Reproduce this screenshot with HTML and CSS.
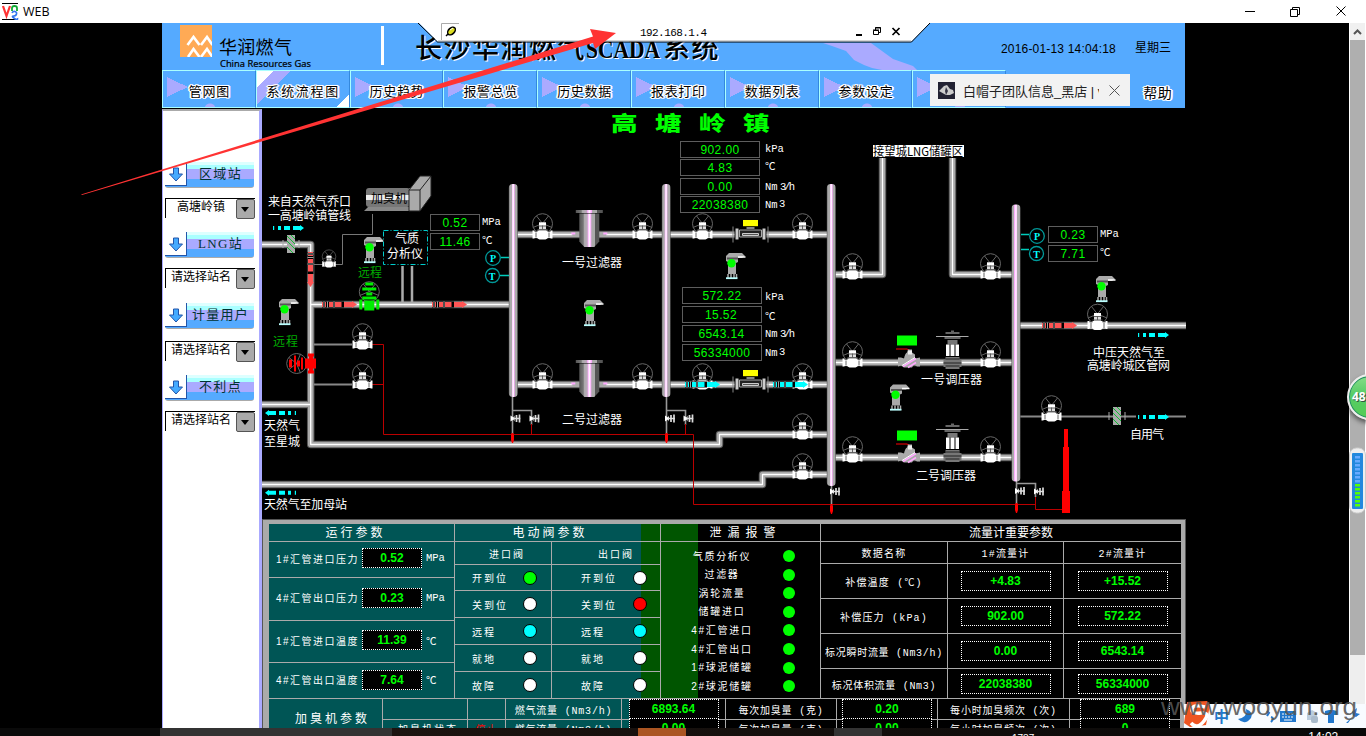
FILE: index.html
```html
<!DOCTYPE html>
<html lang="zh-CN">
<head>
<meta charset="utf-8">
<title>WEB</title>
<link rel="stylesheet" href="styles.css">
</head>
<body>
<header class="titlebar">
  <svg class="vnc" width="17" height="17" viewBox="0 0 17 17"><path d="M0 .5H16M0 16.5H16" stroke="#000"/><path d="M1 3l3.500 10L8 3" fill="none" stroke="#f33" stroke-width="2.200"/><path d="M10 8V5q0-2 2.500-2T15 5v3" fill="none" stroke="#1a3" stroke-width="1.800"/><path d="M10 10q1-2 3-1.500t1.500 2.500-3 2 1 2.500 3-.5" fill="none" stroke="#37e" stroke-width="1.600"/></svg>
  <span class="titletext">WEB</span>
  <svg class="winctl" width="110" height="20" viewBox="1245 1 110 20" fill="none" stroke="#000"><path d="M1245 10.500h10M1290.500 8.500h7v7h-7zM1292.500 8.500v-2h7v7h-2M1336.500 5.500l9 9M1345.500 5.500l-9 9"/></svg>
</header>

<div class="desk">
  <div class="app">
    <div class="banner">
      <svg class="logo" width="32" height="32" viewBox="0 0 32 32"><rect width="32" height="32" fill="#fa5"/><path d="M7.500 20l6-8 6 8M21 20l6-8 5.500 8M8 32l5.500-8 6 8M21 32l6-8 5.500 8" fill="none" stroke="#fff" stroke-width="2.600"/></svg>
      <div class="brand"><b>华润燃气</b><i>China Resources Gas</i></div>
      <div class="divider"></div>
      <h1>长沙华润燃气<span>SCADA</span>系统</h1>
      <svg class="swoosh" width="130" height="47" viewBox="0 0 130 47"><path d="M10 20h54l22 16 20 7 4 4H75l-10-2-8-3-10-5-8-9-14-5-9-3z" fill="#aaf"/></svg>
      <span class="clock">2016-01-13 14:04:18</span><span class="week">星期三</span>
    </div>
    <nav class="tabs">
      <a><span>管网图</span></a><a class="on"><span>系统流程图</span></a><a><span>历史趋势</span></a><a><span>报警总览</span></a><a><span>历史数据</span></a><a><span>报表打印</span></a><a><span>数据列表</span></a><a><span>参数设定</span></a><a></a>
      <span class="help">帮助</span>
    </nav>
    <div class="work">
      <aside class="side">
        <div class="sbtn"><svg width="21" height="21" viewBox="0 0 21 21"><path d="M8.500 4h5v6h4L11 17l-6.500-7h4z" fill="#4af" stroke="#25a"/></svg><span>区域站</span></div>
        <div class="sel"><span class="mid">高塘岭镇</span><i></i></div>
        <div class="sbtn"><svg width="21" height="21" viewBox="0 0 21 21"><path d="M8.500 4h5v6h4L11 17l-6.500-7h4z" fill="#4af" stroke="#25a"/></svg><span>LNG站</span></div>
        <div class="sel"><span>请选择站名</span><i></i></div>
        <div class="sbtn low"><svg width="21" height="21" viewBox="0 0 21 21"><path d="M8.500 4h5v6h4L11 17l-6.500-7h4z" fill="#4af" stroke="#25a"/></svg><span>计量用户</span></div>
        <div class="sel"><span>请选择站名</span><i></i></div>
        <div class="sbtn"><svg width="21" height="21" viewBox="0 0 21 21"><path d="M8.500 4h5v6h4L11 17l-6.500-7h4z" fill="#4af" stroke="#25a"/></svg><span>不利点</span></div>
        <div class="sel"><span>请选择站名</span><i></i></div>
      </aside>
      <main class="main">
<svg class="flow" width="924" height="410" viewBox="262 109 924 410">
<defs>
  <g id="pipes"><path d="M262 244.500H310.700V444.500H719.500V434.500H828"/><path d="M311 304.500H510"/><path d="M262 404.500H311"/><path d="M262 484.500H762.500V474.500H828"/><path d="M515 234.500H828M515 384.500H828"/><path d="M833 274.500H882.500V158M952.500 158V274.500H1013M833 362.500H1013M833 457.500H1013M1018 325.500H1186"/></g>
  <linearGradient id="tube"><stop offset="0" stop-color="#555"/><stop offset=".12" stop-color="#aaa"/><stop offset=".3" stop-color="#aaa"/><stop offset=".33" stop-color="#faf"/><stop offset=".5" stop-color="#fff"/><stop offset=".62" stop-color="#faf"/><stop offset=".66" stop-color="#aaa"/><stop offset=".88" stop-color="#aaa"/><stop offset="1" stop-color="#555"/></linearGradient>
  <g id="wheel" fill="none" stroke="#666"><circle cy="-10.800" r="10"/><path d="M0-11L-6-18.500M0-11L6-18.500M0-11L-9.500-7M0-11L9.500-7"/></g>
  <g id="valve"><use href="#wheel"/><path d="M-3.500-12h7v8h-7z" fill="#ddd"/><path d="M-3.500-12h7v3h-7zM-5-4H5V4l-2 1H-3l-2-1zM-10-4h2v8h-2zM8-4h2v8H8zM-8-2.500h3v6h-3zM5-2.500h3v6H5z" fill="#fff"/><path d="M-4-8.500H4M-5-5H5M0-9V-5M-6.500-2V3M6.500-2V3" stroke="#555" stroke-width=".9"/></g>
  <g id="cam"><path d="M0 3L3 0H16L19 3 16 5H12V9L10 10V21H2V9L0 8z" fill="#aaa"/><path d="M1 5.500h11" stroke="#555" stroke-width="2"/><path d="M12 4h7.500" stroke="#fff" stroke-width="1.500"/><path d="M2 21v4M5 21v4M8 21v4M10.500 21v4" stroke="#aaa" stroke-width="1.500"/><path d="M0 25.200h11.500" stroke="#bff" stroke-width="1.800"/><circle cx="5.500" cy="10.200" r="4.200" fill="#0f0"/></g>
  <linearGradient id="vesselFill"><stop offset="0" stop-color="#555"/><stop offset=".2" stop-color="#777"/><stop offset=".25" stop-color="#aaa"/><stop offset=".4" stop-color="#bab"/><stop offset=".44" stop-color="#faf"/><stop offset=".5" stop-color="#fff"/><stop offset=".58" stop-color="#faf"/><stop offset=".62" stop-color="#aaa"/><stop offset=".78" stop-color="#aaa"/><stop offset=".8" stop-color="#555"/><stop offset="1" stop-color="#555"/></linearGradient>
  <g id="vessel"><path d="M-17-2.500h34v4h-34z" fill="#aaa"/><path d="M-10-21H10V7L5 12.500H-5L-10 7z" fill="url(#vesselFill)"/><path d="M-13.500-24.500h27v3h-27z" fill="url(#vesselFill)"/><path d="M-18-1h4M14-1h4" stroke="#faf" stroke-width="2"/></g>
  <g id="meter"><path d="M-16-5h32V5h-32z" fill="#000"/><path d="M-17.500-8V8M17.500-8V8" stroke="#888"/><path d="M-15-6h3V5h-3zM12-6h3V5h-3z" fill="#ccc"/><path d="M-11-4.500h22v7h-22z" fill="#222" stroke="#aaa"/><path d="M-8 1v-2h16v2z" fill="#555" stroke="#ccc"/><path d="M-4-7.500h8v2h-8z" fill="#888"/><path d="M-7.500-14.500h15v6.200h-15z" fill="#ff0"/></g>
  <g id="reg"><path d="M-12-27h20v10h-20z" fill="#0f0"/><path d="M-13-13.500H-2L1-12" stroke="#f00" fill="none"/><path d="M-11-5H-8L-5-4Q-4-9-2-10L-1-13H3V-10L6-8V-4L11-5V4H8L5 2 3 5H-5L-8 3-11 4z" fill="#aaa"/><path d="M-1-12h4v4h-4" fill="#eee"/><path d="M-6 4L7-4M-1 5L7 0" stroke="#faf" stroke-width="1.600"/><path d="M-7 3L6-5" stroke="#fff"/></g>
  <g id="slam"><path d="M-16.500-26.500H16" stroke="#aaa"/><path d="M-1.500-32.500H1.500V-31H7V-29H-7V-31H-1.500zM-8-26H8V-24H-8z" fill="#666"/><path d="M-5-23H5V-18.500H-5zM-7-6H7V-3H9V4H7V6H-7V4H-9V-3H-7z" fill="#777"/><path d="M-6.500-18.500H-3V-7H-6.500zM-2-18.500H2V-7H-2zM3-18.500H6.500V-7H3z" fill="#fff"/><path d="M-9 0H9M-7-4H7M-7 3H7" stroke="#222"/></g>
  <g id="flowarrow"><path d="M0-2h1.200v4H0zM5-2H8v4H5zM11-2h6v4h-6zM20-2h7v-1l4 3-4 3V2h-7z"/></g>
  <g id="pipearrow"><path d="M0-3H22V3H0z" fill="#000"/><path d="M0-2.500H1V2.500H0zM3-2.500H4V2.500H3zM7-2.500h4v5H7zM13-2.500h6.500v5H13zM22-2.500h8v-1l5 3.500-5 3.500v-1h-8z"/><path d="M2-3V3M5.500-3V3M12-3V3" stroke="#ccc" stroke-width=".8"/></g>
  <g id="strain"><path d="M-8-4v8M8-4v8" stroke="#aaa"/><path d="M-4-9h8V9h-8z" fill="#aaa"/><path d="M-4-8L4 0M-4-3L4 5M-4 3L2 9M0-9L4-5" stroke="#1b3"/></g>
  <g id="bow"><path d="M-2-3L1-1 2-3V3L1 1-2 3z" fill="#fff"/><path d="M1 0H8M4-3.500v7M7-4v8" stroke="#ddd" stroke-width="1.700"/></g>
  <path id="drop" d="M-1-5H1V-3H1.500V2L.5 5H-.5L-1.500 2V-3H-1z" fill="#f00"/>
</defs>
<rect x="262" y="109" width="924" height="410" fill="#000"/>
<g fill="none" stroke-linejoin="round">
  <use href="#pipes" stroke="#555" stroke-width="7.500"/><use href="#pipes" stroke="#aaa" stroke-width="5.500"/><use href="#pipes" stroke="#fff" stroke-width="1.300"/>
</g>
<g fill="none" stroke="#777"><path d="M372.500 214V234.500H342.500V264.500H314"/><path d="M314 344.500H352M314 384.500H352M1020 416.500H1186" stroke-width="2" stroke="#888"/><path d="M402.500 266V303M412 266V303" stroke="#aaa" stroke-width="2.500"/><path d="M512.500 397V434M512.500 410.500H531.500V425M666.500 397V434M666.500 410.500H685.500V425M831.500 485V506M1016.500 481V505M1016.500 483.500H1035.500V497" stroke="#999" stroke-width="1.600"/></g>
<path d="M372 344.500H383.500V434.500H693.500V504.500H1035.500V497V509.500H1062M372 384.500H383.500M531.500 424V434M685.500 424V434" fill="none" stroke="#b00"/>
<g fill="url(#tube)"><rect x="508.800" y="184" width="9" height="213" rx="4"/><rect x="661.800" y="184" width="8.800" height="213" rx="4"/><rect x="826.800" y="184" width="9" height="302" rx="4"/><rect x="1011.500" y="204.500" width="9" height="277" rx="4"/></g>
<use href="#vessel" x="589.300" y="234.500"/><use href="#vessel" x="589.300" y="384.500"/>
<use href="#meter" x="750.500" y="234.500"/><use href="#meter" x="750.500" y="384.500"/>
<use href="#reg" x="909" y="362.500"/><use href="#reg" x="909" y="457.500"/>
<use href="#slam" x="952.500" y="363"/><use href="#slam" x="952.500" y="456"/>
<use href="#valve" x="542.500" y="234.500"/><use href="#valve" x="642.500" y="234.500"/><use href="#valve" x="702.500" y="234.500"/><use href="#valve" x="802.500" y="234.500"/>
<use href="#valve" x="542.500" y="384.500"/><use href="#valve" x="642.500" y="384.500"/><use href="#valve" x="702.500" y="384.500"/><use href="#valve" x="802.500" y="384.500"/>
<use href="#valve" x="802.500" y="434.500"/><use href="#valve" x="802.500" y="474.500"/>
<use href="#valve" x="852.500" y="274.500"/><use href="#valve" x="990.500" y="274.500"/><use href="#valve" x="852.500" y="362.500"/><use href="#valve" x="990.500" y="362.500"/><use href="#valve" x="852.500" y="457.500"/><use href="#valve" x="990.500" y="457.500"/>
<use href="#valve" x="1097.500" y="325"/><use href="#valve" x="1051.500" y="416.500"/><use href="#valve" x="362.500" y="344.500"/><use href="#valve" x="362.500" y="384.500"/>
<use href="#valve" transform="translate(329 264) scale(.68)"/>
<g transform="translate(369.300 304.500)"><use href="#wheel" y="-2"/><path d="M-4-22H4V-19H-4zM-7-17H7V-14H-7zM-3-12H3V-9H-3zM-7-8H7V-5H-7zM-5-4H5V6H-5zM-10-5h3V5h-3zM7-5h3V5H7z" fill="#0e0"/></g>
<g transform="translate(311 363.500) rotate(-90)"><use href="#wheel" y="-3.500"/><path d="M-4-22H4V-19H-4zM-8-17H8V-15H-8zM-3-14H3V-11H-3zM-6-10H6V-8H-6zM-5-6H5V5H-5zM-10-3h3V3h-3zM7-3h3V3H7zM-8-2H8V2H-8z" fill="#f00"/></g>
<use href="#cam" x="726" y="253"/><use href="#cam" x="584" y="300"/><use href="#cam" x="890" y="384.500"/><use href="#cam" x="1096" y="276"/><use href="#cam" x="364" y="237"/><use href="#cam" x="279" y="299"/>
<use href="#strain" x="291" y="244"/><use href="#strain" x="1117" y="416"/>
<use href="#bow" x="512.500" y="418.500"/><use href="#bow" x="531.500" y="418.500"/><use href="#bow" x="667" y="418.500"/><use href="#bow" x="685.500" y="418.500"/><use href="#bow" x="832" y="491.500"/><use href="#bow" x="1017" y="491"/><use href="#bow" x="1036" y="491.500"/>
<use href="#drop" x="512.500" y="438"/><use href="#drop" x="666.500" y="438"/><use href="#drop" x="831.500" y="509"/><use href="#drop" x="1016.500" y="508"/>
<g fill="#0ff"><use href="#flowarrow" x="273" y="228"/><use href="#flowarrow" transform="translate(296 413) scale(-1 1)"/><use href="#flowarrow" transform="translate(296 492.700) scale(-1 1)"/><use href="#flowarrow" x="1138" y="335"/><path d="M1136 413h24v7h-24z" fill="#000"/><use href="#flowarrow" x="1138" y="417"/><use href="#pipearrow" x="685" y="384.500"/><use href="#pipearrow" x="773" y="384.500"/></g>
<g fill="#f55"><use href="#pipearrow" x="322" y="304.500"/><use href="#pipearrow" x="432" y="304.500"/><use href="#pipearrow" x="1042" y="325.500"/><use href="#pipearrow" transform="translate(310.500 252) rotate(90)"/></g>
<path d="M1064 429h4v18h1v44h1v22h-8v-22h1v-44h1z" fill="#f00"/>
<path d="M368 188H409V207H368L364 211H409L410 203H418V188z" fill="#888"/><rect x="366" y="188" width="44" height="19" rx="3" fill="#777"/><path d="M366 195H409V200H366z" fill="#eee"/><path d="M409 190L420 176H431V196L420 211H409z" fill="#aaa" stroke="#222"/><path d="M409 190H420L431 176M420 190V211" fill="none" stroke="#222"/>
<text class="cj dark" x="371" y="203" textLength="36">加臭机</text>
<rect x="383.500" y="230.500" width="44" height="34" fill="#000" stroke="#0cc" stroke-dasharray="5 2 1 2"/>
<g fill="none" stroke="#bbb" stroke-dasharray="1 1"><path d="M430.500 214.500h49v16h-49zM430.500 233.500h49v16h-49zM680.500 141.500h79v16h-79zM680.500 159.500h79v16h-79zM680.500 178.500h79v16h-79zM680.500 196.500h79v16h-79zM682.500 287.500h79v16h-79zM682.500 306.500h79v16h-79zM682.500 325.500h79v16h-79zM682.500 344.500h79v16h-79zM1048.500 226.500h49v16h-49zM1048.500 245.500h49v16h-49z"/></g>
<g class="num"><text x="455" y="227">0.52</text><text x="455" y="246">11.46</text><text x="720" y="154">902.00</text><text x="720" y="172">4.83</text><text x="720" y="191">0.00</text><text x="720" y="209">22038380</text><text x="722" y="300">572.22</text><text x="721" y="319">15.52</text><text x="721.500" y="338">6543.14</text><text x="722" y="357">56334000</text><text x="1073" y="239">0.23</text><text x="1073" y="258">7.71</text></g>
<g class="unit"><text x="482" y="225">MPa</text><text x="482" y="244">℃</text><text x="765" y="152">kPa</text><text x="765" y="170">℃</text><text x="765" y="190">Nm</text><text x="780" y="190" textLength="15">3/h</text><text x="765" y="208">Nm</text><text x="779" y="207">3</text><text x="765" y="300">kPa</text><text x="765" y="320">℃</text><text x="765" y="337">Nm</text><text x="780" y="337" textLength="15">3/h</text><text x="765" y="356">Nm</text><text x="779" y="355">3</text><text x="1100" y="237">MPa</text><text x="1100" y="256">℃</text></g>
<g fill="none" stroke="#099" stroke-width="1.300"><circle cx="493" cy="258" r="7.300"/><circle cx="492.500" cy="275.500" r="7"/><circle cx="1037" cy="236" r="7.300"/><circle cx="1036.500" cy="253.500" r="7"/></g>
<path d="M501 257.500h8M500 275.500h9M1021 234.500h8M1021 249.500h8" stroke="#0cb" stroke-width="1.500"/>
<g class="pt"><text x="493" y="262">P</text><text x="492" y="280">T</text><text x="1037" y="240">P</text><text x="1036.500" y="258">T</text></g>
<g class="cj"><text x="268" y="206" textLength="83">来自天然气乔口</text><text x="268" y="219.500" textLength="83">一高塘岭镇管线</text><text x="395" y="243" textLength="24">气质</text><text x="387" y="258" textLength="36">分析仪</text><text x="562" y="267" textLength="60">一号过滤器</text><text x="562" y="424" textLength="60">二号过滤器</text><text x="921" y="384" textLength="61">一号调压器</text><text x="916" y="480" textLength="60">二号调压器</text><text x="264" y="430" textLength="36">天然气</text><text x="264" y="446" textLength="36">至星城</text><text x="264" y="509" textLength="83">天然气至加母站</text><text x="1093" y="357" textLength="72">中压天然气至</text><text x="1087" y="370" textLength="83">高塘岭城区管网</text><text x="1130" y="439" textLength="34">自用气</text></g>
<g class="cj green"><text x="358" y="277" textLength="24">远程</text><text x="273" y="346" textLength="25">远程</text></g>
<rect x="873" y="145" width="91" height="12" fill="#fff"/><text class="cj dark" x="873" y="155.500" textLength="90" lengthAdjust="spacingAndGlyphs">接望城LNG储罐区</text>
<g class="place"><text transform="translate(611 131) scale(1.330 1)">高</text><text transform="translate(655 131) scale(1.330 1)">塘</text><text transform="translate(699 131) scale(1.330 1)">岭</text><text transform="translate(743 131) scale(1.330 1)">镇</text></g>
</svg>
        <section class="panel">
          <div class="upper">
            <div class="run">
              <h2>运行参数</h2>
              <div class="prow"><span>1#汇管进口压力</span><b class="val">0.52</b><em>MPa</em></div>
              <div class="prow"><span>4#汇管出口压力</span><b class="val">0.23</b><em>MPa</em></div>
              <div class="prow"><span>1#汇管进口温度</span><b class="val">11.39</b><em>℃</em></div>
              <div class="prow"><span>4#汇管出口温度</span><b class="val">7.64</b><em>℃</em></div>
            </div>
            <div class="evalve">
              <h2>电动阀参数</h2>
              <div class="vgrid">
                <div class="vh">进口阀</div><div class="vh r">出口阀</div>
                <div><span>开到位</span><i class="g"></i></div><div class="r"><span>开到位</span><i></i></div>
                <div><span>关到位</span><i></i></div><div class="r"><span>关到位</span><i class="red"></i></div>
                <div><span>远程</span><i class="c"></i></div><div class="r"><span>远程</span><i class="c"></i></div>
                <div><span>就地</span><i></i></div><div class="r"><span>就地</span><i></i></div>
                <div><span>故障</span><i></i></div><div class="r"><span>故障</span><i></i></div>
              </div>
            </div>
            <div class="leak">
              <h2>泄漏报警</h2>
              <div class="lrows">
                <div><span>气质分析仪</span><i></i></div><div><span>过滤器</span><i></i></div><div><span>涡轮流量</span><i></i></div><div><span>储罐进口</span><i></i></div><div><span>4#汇管进口</span><i></i></div><div><span>4#汇管出口</span><i></i></div><div><span>1#球泥储罐</span><i></i></div><div><span>2#球泥储罐</span><i></i></div>
              </div>
            </div>
            <div class="meters">
              <h2>流量计重要参数</h2>
              <div class="mgrid">
                <div>数据名称</div><div>1#流量计</div><div>2#流量计</div>
                <div>补偿温度 (℃)</div><div><b class="val">+4.83</b></div><div><b class="val">+15.52</b></div>
                <div>补偿压力 (kPa)</div><div><b class="val">902.00</b></div><div><b class="val">572.22</b></div>
                <div class="tight">标况瞬时流量 (Nm3/h)</div><div><b class="val">0.00</b></div><div><b class="val">6543.14</b></div>
                <div class="tight">标况体积流量 (Nm3)</div><div><b class="val">22038380</b></div><div><b class="val">56334000</b></div>
              </div>
            </div>
          </div>
          <div class="lower">
            <div class="odor">加臭机参数</div>
            <div></div><div></div><div>燃气流量 (Nm3/h)</div><div><b class="val">6893.64</b></div><div>每次加臭量 (克)</div><div><b class="val">0.20</b></div><div>每小时加臭频次 (次)</div><div><b class="val">689</b></div>
            <div class="state">加臭机状态</div><div class="stop">停止</div><div>燃气流量 (Nm3/h)</div><div><b class="val">0.00</b></div><div>每次加臭量 (克)</div><div><b class="val">0.00</b></div><div>每小时加臭频次 (次)</div><div><b class="val">0</b></div>
          </div>
        </section>
      </main>
    </div>
  </div>
  <div class="scroll"><div class="up"><svg width="9" height="6" viewBox="0 0 9 6"><path d="M1 5l3.500-3.500L8 5" fill="none" stroke="#555" stroke-width="2"/></svg></div><div class="thumb"></div></div>
</div>
<footer class="taskbar"><span class="t1"></span><span class="t2"></span><span class="t4">1737</span><span class="t5">14:02</span></footer>

<svg class="rdp" width="514" height="21" viewBox="418 22 514 21"><path d="M418 22L437.500 41.500H911.500L931 22z" fill="#fff"/><path d="M418 23L437.500 42H911.500L930 23" fill="none" stroke="#000"/><path d="M438 41H911" stroke="#aaa"/><path d="M441.500 40V23.500H459" fill="none" stroke="#aaa"/><path d="M446 36l3-3" stroke="#000" stroke-width="1.500"/><ellipse cx="451.500" cy="31" rx="4.500" ry="3" transform="rotate(-45 451.500 31)" fill="#dd2" stroke="#000" stroke-width="1.500"/><path d="M450 30l3-2" stroke="#fff"/><text x="640" y="36" textLength="67">192.168.1.4</text><path d="M856 35h6" stroke="#000" stroke-width="2"/><path d="M873.500 30.500h5v4h-5zM875.500 30v-2.500h5v5h-2M873 30h6M875 28h6" fill="none" stroke="#000"/><path d="M892.500 28l7 7M899.500 28l-7 7" stroke="#000" stroke-width="1.700"/></svg>
<div class="floatTab"><svg width="17" height="17" viewBox="0 0 17 17"><path d="M0 0h17v17H0z" fill="#223"/><path d="M1 9l5-5 3-1 3 4 3 1 1 3-4 2H8z" fill="#ccc"/><path d="M8 5l2 4-2 4-1-4z" fill="#334"/></svg><span>白帽子团队信息_黑店 | v</span><svg width="11" height="11" viewBox="0 0 11 11"><path d="M.5.5l10 10M10.500.5l-10 10" stroke="#555"/></svg></div>
<svg class="arrow" width="540" height="170" viewBox="78 28 540 170"><path d="M81 194.500L593 36.500 590 29 616 33 595 49 593 43 82 195z" fill="#f33"/></svg>
<div class="ball">48</div>
<svg class="gauge" width="17" height="68" viewBox="1349 446 17 68"><rect x="1349.500" y="448" width="16" height="65" rx="7" fill="#eee" stroke="#ccc"/><rect x="1352" y="453" width="11" height="56" rx="1" fill="#28d"/><path d="M1357.500 456V483" stroke="#6af" stroke-width="5" stroke-dasharray="2.500 1.500"/><path d="M1357.500 484V507" stroke="#5f0" stroke-width="5" stroke-dasharray="2.500 1.500"/></svg>
<svg class="ime" width="206" height="34" viewBox="1160 698 206 34"><rect x="1184" y="704" width="182" height="24" fill="#f8fbff"/><path d="M1187 702l20-1 3 4-4 20-16 2-6-4z" fill="#e52"/><path d="M1205 707q-12-3-13 2t9 4 3 8-13 2" fill="none" stroke="#fff" stroke-width="3.500"/><text x="1214" y="722" class="zh">中</text><path d="M1246 709q2 8-8 10 7 7 13-1 3-6-5-9z" fill="#27c"/><path d="M1267 711l2 2-2 3M1271 717q4 1 0 5" fill="none" stroke="#27c" stroke-width="2"/><path d="M1280 711h16v11h-16z" fill="#27c"/><path d="M1282 714h12M1282 717h12" stroke="#fff" stroke-dasharray="2 1"/><path d="M1284 720h8" stroke="#fff"/><path d="M1307 713l5-3 5 3v7h-10z" fill="#bcd"/><rect x="1311" y="716" width="7" height="7" rx="2" fill="#abc"/><path d="M1325 711l4-1h4l4 1v4h-3v8h-6v-8h-3z" fill="#27c"/><path d="M1346 723l7-7-1-4 5-4-1 5 4 1-4 3-3-1-5 7z" fill="#27c"/><text class="mark" x="1161" y="715" textLength="196" lengthAdjust="spacingAndGlyphs">www.wooyun.org</text></svg>
</body>
</html>
```
FILE: styles.css
```css
* { box-sizing: border-box; }
body {
  margin: 0; width: 1366px; height: 736px; overflow: hidden; background: #000; position: relative;
  font-family: "Liberation Sans", "Noto Sans CJK SC", sans-serif; font-size: 12px; color: #000;
}
i, em { font-style: normal; }
h1, h2 { margin: 0; font-weight: normal; }

.titlebar { height: 23px; background: #fff; display: flex; align-items: center; padding: 0 11px 0 2px; }
.titletext { margin-left: 4px; font: 12.5px "Open Sans", sans-serif; }
.winctl { margin-left: auto; }

.desk { display: flex; justify-content: space-between; height: 705px; padding-left: 162px; overflow: hidden; }
.app { width: 1024px; height: 705px; overflow: hidden; }

.banner { width: 1023px; height: 47px; background: #5af; display: flex; align-items: flex-start; padding-left: 18px; overflow: hidden; }
.logo { margin-top: 2px; flex: none; }
.brand { width: 162px; margin-left: 7px; padding-top: 14px; }
.brand b, .brand i { display: block; white-space: nowrap; }
.brand b { font-size: 18px; line-height: 22px; font-weight: 400; letter-spacing: .3px; }
.brand i { font: 9.300px/10px "Noto Sans", sans-serif; -webkit-text-stroke: .2px #000; padding-left: 1px; }
.divider { width: 3px; height: 39px; margin-top: 3px; background: #fff; }
h1 { margin: 7px 0 0 31px; font: 500 27px/38px "Liberation Serif", "Noto Sans CJK SC", serif; letter-spacing: 1.500px; white-space: nowrap; text-shadow: 1px 1px #fff; width: 305px; }
h1 span { display: inline-block; width: 77px; font: bold 25px/30px "Liberation Serif", serif; letter-spacing: 0; transform: scaleX(.86); transform-origin: 0 50%; }
.swoosh { flex: none; margin-left: 87px; }
.clock { margin: 18px 0 0 64px; width: 134px; letter-spacing: .18px; white-space: nowrap; line-height: 16px; }
.week { margin-top: 17px; line-height: 17px; white-space: nowrap; }

.tabs { width: 1023px; height: 38px; background: #5af; display: flex; align-items: flex-start; }
.tabs a { width: 93.800px; height: 38px; flex: none; border: 1px solid #aff; border-right-color: #38d; display: flex; justify-content: center; align-items: center; padding: 2px 0 0 1px;
  background: radial-gradient(circle at 47px 38px, #aaf 0 5px, transparent 6px), conic-gradient(from 245deg at 21px 14px, #aaf 0 50deg, transparent 50deg) 4px 2px / 22px 26px no-repeat; }
.tabs a.on { background: linear-gradient(135deg, #fff 0 12px, #aaf 12px 24px, transparent 24px), linear-gradient(315deg, #fff 0 9px, transparent 9px), #5af; }
.tabs .on span { letter-spacing: 1.700px; }
.tabs span { font-size: 13px; letter-spacing: .7px; white-space: nowrap; text-shadow: 1px 0 #fff, -1px 0 #fff, 0 1px #fff, 0 -1px #fff, 1px 1px #fff, -1px -1px #fff, 1px -1px #fff, -1px 1px #fff, 2px 0 #fff, -2px 0 #fff; }
.tabs .help { margin: 13px 0 0 137px; font-size: 14px; line-height: 20px; }

.work { display: flex; height: 620px; margin-top: 1px; }
.side { width: 100px; background: #fff; border-left: 1px solid #aaf; border-right: 3px solid #aaf; border-top: 2px solid #aaa; padding: 51px 4px 0 2px; }
.sbtn { width: 89px; height: 26px; display: flex; align-items: flex-start; margin-bottom: 10px; border-bottom: 1px solid #aaa; border-radius: 0 0 3px 3px; background: linear-gradient(#dff 0 3px, #aff 3px 7px, #aaf 7px 17px, #5af 17px); }
.sbtn.low { margin-top: 15px; margin-bottom: 12px; }
.sbtn svg { flex: none; background: #fff; border-right: 1px solid #25a; border-bottom: 1px solid #25a; width: 22px; height: 24px; padding-top: 2px; }
.sbtn span { flex: 1; text-align: center; font: 13px/24px "Liberation Serif", "Noto Sans CJK SC", serif; letter-spacing: 1.300px; color: #033; white-space: nowrap; }
.sel { width: 90px; height: 20px; display: flex; border-top: 1px solid #000; border-left: 1px solid #000; margin-bottom: 14px; }
.sel span { width: 70px; padding-left: 5px; line-height: 16px; white-space: nowrap; }
.sel .mid { padding-left: 11px; }
.sel i { width: 19px; height: 20px; background: #aaa; border: 1px solid #555; border-radius: 2px; padding: 7px 0 0 4px; }
.sel i::after { content: ""; display: block; width: 0; border: 4px solid transparent; border-top: 5px solid #000; }

.main { width: 924px; height: 620px; }
.flow { display: block; }
.cj { font: 12px "Noto Sans CJK SC", sans-serif; fill: #fff; }
.cj.dark { fill: #000; }
.cj.green { fill: #0a0; }
.num { font: 12px "Liberation Sans", sans-serif; fill: #0f0; text-anchor: middle; letter-spacing: .4px; }
.unit { font: 10.500px "Liberation Mono", "Noto Sans CJK SC", monospace; fill: #fff; }
.pt { font: bold 10px "Liberation Serif", serif; fill: #0ff; text-anchor: middle; }
.place { font: 900 20px "Noto Sans CJK SC", sans-serif; fill: #0f0; }

.panel { height: 230px; border: solid #aaa; border-width: 5px 5px 0 7px; outline: 1px solid #555; outline-offset: -1px; color: #fff;
  background: linear-gradient(90deg, #055 0 372px, #050 372px 429px, #000 429px) 0 0 / 100% 176px no-repeat, linear-gradient(90deg, #055 372px, #000 372px); }
.panel h2 { height: 18px; border-bottom: 1px solid #aaa; font-size: 12px; line-height: 18px; letter-spacing: 3px; text-align: center; white-space: nowrap; }
.upper { display: grid; grid-template-columns: 185px 206px 160px 361px; height: 175px; font-size: 10px; border-bottom: 1px solid #aaa; }
.upper > div + div { border-left: 1px solid #aaa; }
.val { display: block; width: 60px; height: 20px; border: 1px dotted #fff; background: #000; color: #0f0; font: bold 12px/19px "Liberation Sans", sans-serif; letter-spacing: 0; text-align: center; }
.run { display: grid; grid-template-rows: 18px 36px 43px 42px 36px; }
.run h2 { padding-right: 12px; }
.evalve h2 { padding-right: 15px; }
.prow { display: flex; align-items: center; padding: 0 0 3px 7px; border-bottom: 1px solid #aaa; }
.prow:last-child { border: 0; }
.prow span { width: 86px; letter-spacing: 1.500px; white-space: nowrap; }
.prow em { margin-left: 4px; font: 10.500px "Liberation Mono", "Noto Sans CJK SC", monospace; }
.vgrid { display: grid; grid-template-columns: 96px 109px; grid-template-rows: 23px 26px 27px 27px 27px 27px; }
.vgrid > div { display: flex; align-items: center; padding: 0 0 0 17px; border-bottom: 1px solid #aaa; }
.vgrid > div:nth-last-child(-n+2) { border-bottom: 0; padding-bottom: 1px; }
.vgrid .r { border-left: 1px solid #aaa; padding-left: 29px; }
.vgrid .vh { padding-left: 34px; letter-spacing: 2px; }
.vgrid .vh.r { padding-left: 46px; }
.vgrid span { width: 51px; letter-spacing: 2px; white-space: nowrap; }
.vgrid .r span { width: 52px; }
.vgrid i { width: 14px; height: 14px; border: 1px solid #000; border-radius: 50%; background: #fff; }
.vgrid i.g { background: #0f0; } .vgrid i.red { background: #f00; } .vgrid i.c { background: #0ff; }
.leak h2 { letter-spacing: 6px; padding-left: 10px; }
.lrows { padding-top: 5px; }
.lrows div { height: 18.550px; display: flex; align-items: center; }
.lrows span { width: 122px; padding-bottom: 2px; text-align: center; letter-spacing: 1.700px; white-space: nowrap; }
.lrows i { width: 12px; height: 12px; border-radius: 50%; background: #0f0; }
.meters h2 { letter-spacing: 0; padding-left: 20px; }
.mgrid { display: grid; grid-template-columns: 127px 116px 117px; grid-template-rows: 22px 35px 35px 35px 30px; }
.mgrid > div { display: flex; align-items: center; justify-content: center; border-bottom: 1px solid #aaa; border-right: 1px solid #aaa; letter-spacing: 1.200px; white-space: nowrap; font-family: "Liberation Mono", "Noto Sans CJK SC", monospace; }
.mgrid > .tight { letter-spacing: .7px; }
.mgrid > div:nth-child(3n) { border-right: 0; }
.mgrid > div:nth-last-child(-n+3) { border-bottom: 0; }
.mgrid .val, .lower .val { width: 90px; }
.lower { display: grid; grid-template-columns: 114px 85px 38px 116px 104px 111px 101px 132px 111px; grid-template-rows: 21px 17px; font: 10px "Liberation Mono", "Noto Sans CJK SC", monospace; }
.lower > div { display: flex; align-items: center; justify-content: center; border-right: 1px solid #aaa; border-bottom: 1px solid #aaa; letter-spacing: .8px; white-space: nowrap; }
.lower > .odor { grid-row: span 2; font-size: 12px; letter-spacing: 3px; padding-left: 14px; }
.lower > .state { letter-spacing: 2px; padding-left: 6px; }
.lower > .stop { color: #f00; letter-spacing: 1px; }

.scroll { width: 17px; height: 705px; background: #eee; border-left: 1px solid #fff; border-right: 1px solid #fff; }
.up { height: 17px; background: #f0f0f0; display: flex; align-items: center; justify-content: center; }
.thumb { height: 615px; background: #afafaf; }
.taskbar { height: 8px; background: linear-gradient(90deg, #0a0a0a 0 160px, #333 160px 392px, #1c1410 392px, #080808); display: flex; overflow: hidden; color: #fff; font: 12px/14px "Liberation Sans", sans-serif; }
.t1 { width: 48px; margin-left: 638px; background: #a52; }
.t2 { width: 48px; margin-left: 148px; background: #333; }
.t4 { margin: 4px 0 0 130px; font-size: 10px; }
.t5 { margin: 2px 0 0 274px; }

.rdp { position: absolute; left: 418px; top: 22px; font: 11px "Liberation Mono", monospace; }
.floatTab { position: absolute; left: 930px; top: 74px; width: 200px; height: 32px; background: #f2f2f2; display: flex; align-items: center; padding: 0 10px 0 8px; }
.floatTab span { width: 136px; margin: 0 10px 0 8px; overflow: hidden; white-space: nowrap; font-size: 13px; color: #222; }
.floatTab svg { flex: none; }
.arrow { position: absolute; left: 78px; top: 28px; }
.ball { position: absolute; left: 1347px; top: 374px; width: 46px; height: 46px; border-radius: 50%; border: 2px solid #eee; box-shadow: inset 0 0 0 1px #286, 0 3px 5px #0008; background: linear-gradient(#8d8, #5c6 45%, #5c5); color: #fff; font: bold 12px/42px "Open Sans", sans-serif; padding-left: 3px; text-shadow: 1px 1px #354; }
.gauge { position: absolute; left: 1349px; top: 446px; }
.ime { position: absolute; left: 1160px; top: 698px; }
.zh { font: bold 15px "Noto Sans CJK SC", sans-serif; fill: #27c; }
.mark { font: 24px "Liberation Sans", sans-serif; fill: #555; fill-opacity: .9; }
```
